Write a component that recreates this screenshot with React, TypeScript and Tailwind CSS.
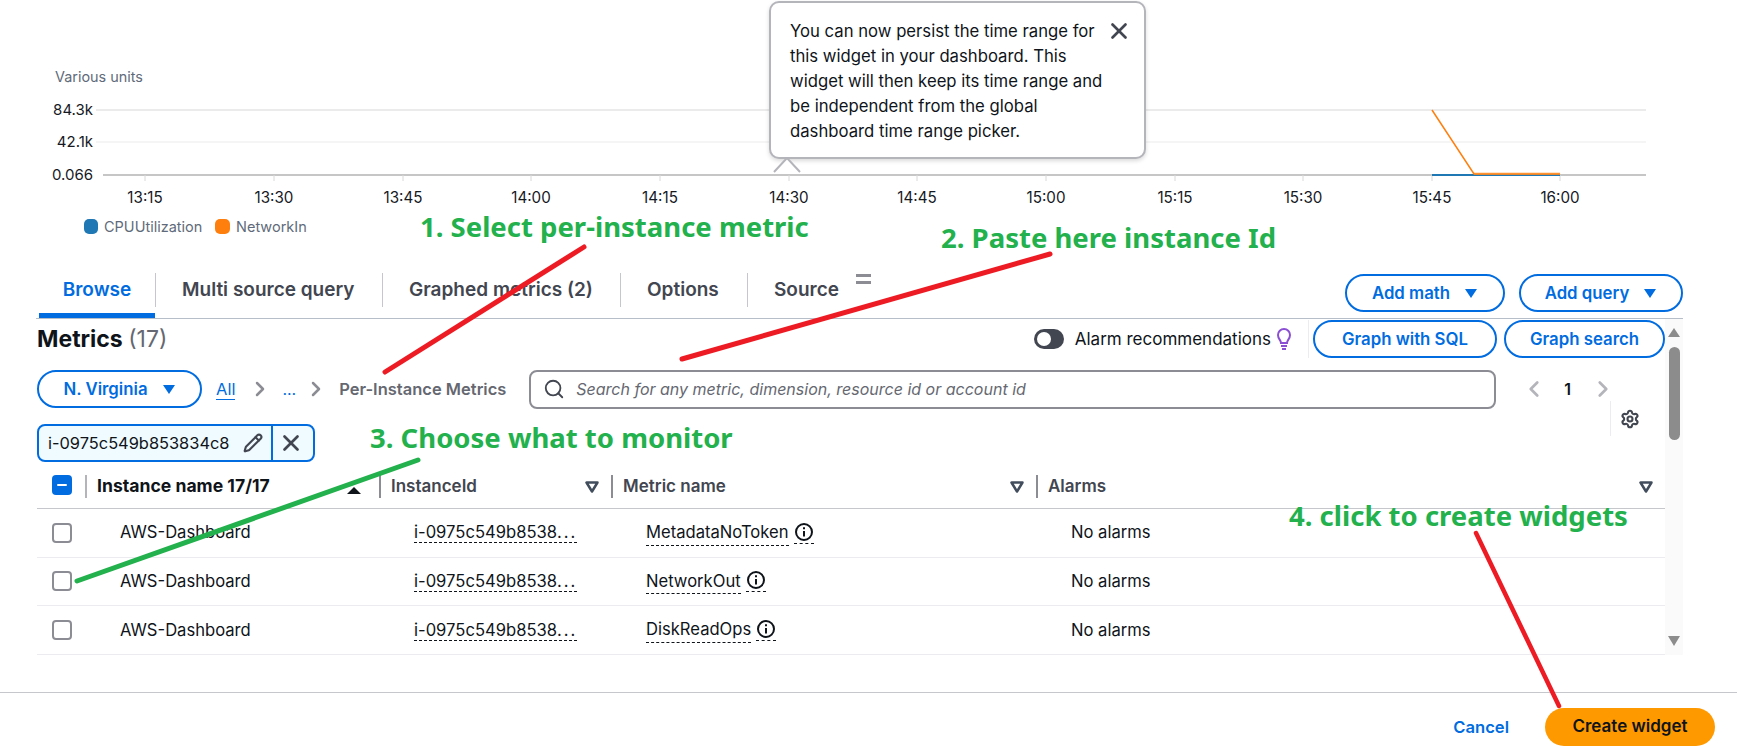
import { ChevronLeft, ChevronRight, Pencil, Search, Settings, X } from "lucide-react";

const ticks = [
  ["13:15", 145],
  ["13:30", 274],
  ["13:45", 403],
  ["14:00", 531],
  ["14:15", 660],
  ["14:30", 789],
  ["14:45", 917],
  ["15:00", 1046],
  ["15:15", 1175],
  ["15:30", 1303],
  ["15:45", 1432],
  ["16:00", 1560],
] as const;

const rows = ["MetadataNoToken", "NetworkOut", "DiskReadOps"];

const notes = [
  { text: "1. Select per-instance metric", cls: "left-[420px] top-[207px]" },
  { text: "2. Paste here instance Id", cls: "left-[941px] top-[218px]" },
  { text: "3. Choose what to monitor", cls: "left-[370px] top-[418px]" },
  { text: "4. click to create widgets", cls: "left-[1289px] top-[496px]" },
];

function Caret({ className = "" }: { className?: string }) {
  return (
    <svg width="14" height="11" viewBox="0 0 14 11" className={className}>
      <path d="M1 1h12L7 10z" fill="currentColor" />
    </svg>
  );
}

function FilterArrow() {
  return (
    <svg width="14" height="12" viewBox="0 0 14 12" className="text-[#414d5c]">
      <path d="M1.5 1.5h11L7 10.5z" fill="none" stroke="currentColor" strokeWidth="2.5" strokeLinejoin="round" />
    </svg>
  );
}

function InfoIcon() {
  return (
    <svg width="20" height="20" viewBox="0 0 20 20" className="text-[#0f141a]">
      <circle cx="10" cy="10" r="8" fill="none" stroke="currentColor" strokeWidth="2" />
      <path d="M10 9v5.5" stroke="currentColor" strokeWidth="2" />
      <path d="M10 5.2v2" stroke="currentColor" strokeWidth="2" />
    </svg>
  );
}

function PillButton({ label, caret, className = "" }: { label: string; caret?: boolean; className?: string }) {
  return (
    <button
      className={`flex h-[38px] items-center justify-center gap-[14px] rounded-[19px] border-2 border-[#006ce0] bg-white pt-px text-[16.8px] font-semibold text-[#006ce0] ${className}`}
    >
      {label}
      {caret ? <Caret /> : null}
    </button>
  );
}

function Chart() {
  return (
    <div className="h-[245px] shrink-0">
      <svg width="1737" height="245" viewBox="0 0 1737 245" className="block" fontFamily="Inter, sans-serif">
        <text x="55" y="82" fontSize="14.4" fill="#5f6b7a">Various units</text>
        <line x1="96" x2="1646" y1="110" y2="110" stroke="#ebebeb" strokeWidth="2" />
        <line x1="96" x2="1646" y1="142" y2="142" stroke="#ebebeb" strokeWidth="1" />
        <line x1="103" x2="1646" y1="175" y2="175" stroke="#c6c6c6" strokeWidth="2" />
        <text x="93" y="115" fontSize="15" textAnchor="end" fill="#16191f">84.3k</text>
        <text x="93" y="147" fontSize="15" textAnchor="end" fill="#16191f">42.1k</text>
        <text x="93" y="180" fontSize="15" textAnchor="end" fill="#16191f">0.066</text>
        {ticks.map(([label, x]) => (
          <g key={label}>
            <line x1={x} x2={x} y1="175" y2="181" stroke="#d8d8d8" />
            <text x={x} y="203" fontSize="15.2" textAnchor="middle" fill="#16191f">{label}</text>
          </g>
        ))}
        <path d="M1432 175H1560" stroke="#1f77b4" strokeWidth="2" fill="none" />
        <path d="M1474 173.5H1560" stroke="#ffc99a" strokeWidth="2" fill="none" />
        <path d="M1432 110L1474 174H1560" stroke="#ff7f0e" strokeWidth="1.5" fill="none" />
        <rect x="84" y="219" width="14" height="15" rx="5" fill="#1f77b4" />
        <text x="104" y="232" fontSize="14.5" fill="#5f6b7a">CPUUtilization</text>
        <rect x="215" y="219" width="15" height="15" rx="5" fill="#ff7f0e" />
        <text x="236" y="232" fontSize="14.5" fill="#5f6b7a">NetworkIn</text>
      </svg>
    </div>
  );
}

function Tabs() {
  const items = [
    ["Multi source query", "w-[227px]"],
    ["Graphed metrics (2)", "w-[238px]"],
    ["Options", "w-[127px]"],
    ["Source", "w-[110px]"],
  ];
  return (
    <div className="mr-[54px] ml-[36px] flex h-[74px] shrink-0 items-end justify-between border-b border-[#b6bec9]">
      <div className="flex h-[45px] items-start text-[19px] font-semibold text-[#424650]">
        <div className="ml-[3px] flex h-[45px] w-[116px] justify-center border-b-[5px] border-[#006ce0] pt-[3px] text-[#006ce0]">
          Browse
        </div>
        {items.map(([label, width]) => (
          <div key={label} className={`flex h-[34px] items-center border-l border-[#c6c6cd] pl-[26px] ${width}`}>
            {label}
          </div>
        ))}
        <div className="mt-[1px] -ml-[1px] flex flex-col gap-[4px]">
          <div className="h-[3px] w-[15px] bg-[#8c8c94]" />
          <div className="h-[3px] w-[15px] bg-[#8c8c94]" />
        </div>
      </div>
      <div className="mb-[6px] flex gap-[14px]">
        <PillButton label="Add math" caret className="w-[160px]" />
        <PillButton label="Add query" caret className="w-[164px]" />
      </div>
    </div>
  );
}

function MetricsToolbar() {
  return (
    <>
      <div className="mt-px flex h-[38px] items-center justify-between">
        <h2 className="pt-px text-[23px] font-bold text-[#0f141a]">
          Metrics <span className="font-normal text-[#656871]">(17)</span>
        </h2>
        <div className="flex items-center">
          <div className="flex h-[20px] w-[30px] items-center rounded-full bg-[#424650] pl-[3px]">
            <div className="h-[14px] w-[14px] rounded-full bg-white" />
          </div>
          <span className="ml-[11px] pt-px text-[17px] text-[#0f141a]">Alarm recommendations</span>
          <svg width="16" height="22" viewBox="0 0 16 22" className="ml-[5px]">
            <path d="M5 15c0-3-3-4-3-8a6 6 0 0 1 12 0c0 4-3 5-3 8z" fill="none" stroke="#8a4fd3" strokeWidth="2" />
            <path d="M5 18h6M6 21h4" stroke="#8a4fd3" strokeWidth="2" />
          </svg>
          <div className="ml-[16px] h-[38px] border-l border-[#ebebf0]" />
          <PillButton label="Graph with SQL" className="ml-[4px] w-[184px]" />
          <PillButton label="Graph search" className="ml-[7px] w-[161px]" />
        </div>
      </div>

      <div className="mt-[12px] flex h-[38px] items-center">
        <PillButton label="N. Virginia" caret className="w-[165px]" />
        <a className="ml-[14px] border-b border-[#006ce0] text-[16.5px] leading-[20px] text-[#006ce0]">All</a>
        <ChevronRight size={24} strokeWidth={2.5} className="ml-[13px] text-[#8c8c94]" />
        <span className="ml-[10px] text-[16px] text-[#006ce0]">...</span>
        <ChevronRight size={24} strokeWidth={2.5} className="ml-[8px] text-[#8c8c94]" />
        <span className="ml-[11px] w-[190px] text-[16.5px] font-semibold text-[#656871]">Per-Instance Metrics</span>
        <div className="flex h-[39px] w-[967px] items-center rounded-[8px] border-2 border-[#8c8c94] pl-[12px]">
          <Search size={22} strokeWidth={2} className="text-[#424650]" />
          <span className="ml-[11px] text-[16px] text-[#656871] italic">
            Search for any metric, dimension, resource id or account id
          </span>
        </div>
        <ChevronLeft size={26} strokeWidth={2.5} className="ml-[25px] text-[#b4b4bb]" />
        <span className="ml-[17px] text-[16px] font-semibold text-[#0f141a]">1</span>
        <ChevronRight size={26} strokeWidth={2.5} className="ml-[19px] text-[#b4b4bb]" />
      </div>

      <div className="mt-[16px] flex h-[38px] items-start justify-between">
        <div className="flex h-[38px] w-[278px] items-center rounded-[8px] border-2 border-[#006ce0] bg-[#f0fbff]">
          <span className="ml-[9px] w-[195px] text-[16.4px] text-[#0f141a]">i-0975c549b853834c8</span>
          <Pencil size={20} strokeWidth={2.5} className="text-[#424650]" />
          <div className="ml-[8px] h-full border-l-2 border-[#006ce0]" />
          <X size={26} strokeWidth={2.5} className="ml-[5px] text-[#424650]" />
        </div>
        <div className="-mt-[23px] mr-[25px] flex h-[35px] items-center border-l border-[#ebebf0] pl-[9px]">
          <Settings size={20} strokeWidth={2.5} className="text-[#424650]" />
        </div>
      </div>
    </>
  );
}

function MetricsTable() {
  const head = "flex h-[23px] items-center justify-between border-l-2 pr-[12px] pl-[10px] text-[17px]";
  return (
    <div>
      <div className="mt-[9px] flex h-[38px] border-b border-[#c6c6cd] pt-[4px]">
        <div className="w-[48px] pl-[15px]">
          <div className="flex h-[20px] w-[20px] items-center justify-center rounded-[4px] bg-[#006ce0]">
            <div className="h-[2px] w-[10px] rounded bg-white" />
          </div>
        </div>
        <div className={`${head} w-[294px] border-[#b4b4bb] font-bold text-[#0f141a]`}>
          <span className="text-[17.6px]">Instance name 17/17</span>
          <svg width="16" height="8" viewBox="0 0 16 8" className="mt-[6px] mr-[5px]">
            <path d="M1 8L8 1l7 7z" fill="#0f141a" />
          </svg>
        </div>
        <div className={`${head} w-[232px] border-[#8c8c94] font-semibold text-[#424650]`}>
          InstanceId
          <FilterArrow />
        </div>
        <div className={`${head} w-[425px] border-[#8c8c94] font-semibold text-[#424650]`}>
          Metric name
          <FilterArrow />
        </div>
        <div className={`${head} w-[629px] border-[#8c8c94] font-semibold text-[#424650]`}>
          Alarms
          <FilterArrow />
        </div>
      </div>
      {rows.map((metric) => (
        <div key={metric} className="flex h-[48.67px] items-center border-b border-[#ebebf0] text-[16.6px] text-[#0f141a]">
          <div className="w-[48px] pl-[15px]">
            <div className="h-[20px] w-[20px] rounded-[4px] border-2 border-[#8c8c94] bg-white" />
          </div>
          <div className="w-[294px] pl-[35px]">AWS-Dashboard</div>
          <div className="w-[232px] pl-[35px]">
            <span className="border-b border-dashed border-[#0f141a]">
              i-0975c549b8538<span className="tracking-[2px]">...</span>
            </span>
          </div>
          <div className="flex w-[425px] items-center pl-[35px]">
            <span className="border-b border-dashed border-[#0f141a]">{metric}</span>
            <span className="ml-[5px] flex border-b border-dashed border-[#0f141a] pb-[1px]">
              <InfoIcon />
            </span>
          </div>
          <div className="w-[629px] pl-[35px]">No alarms</div>
        </div>
      ))}
    </div>
  );
}

function Scrollbar() {
  return (
    <div className="flex h-[336px] w-[18px] shrink-0 flex-col items-center bg-[#fafafa] pt-[9px]">
      <svg width="12" height="9" viewBox="0 0 12 9">
        <path d="M6 0l6 9H0z" fill="#8c8c8c" />
      </svg>
      <div className="mt-[10px] h-[93px] w-[11px] rounded-full bg-[#8c8c8c]" />
      <svg width="12" height="10" viewBox="0 0 12 10" className="mt-[196px]">
        <path d="M0 0h12L6 10z" fill="#8c8c8c" />
      </svg>
    </div>
  );
}

function Annotations() {
  return (
    <>
      {notes.map((note) => (
        <div
          key={note.text}
          className={`absolute font-['Noto_Sans',sans-serif] text-[27.5px] leading-[40px] font-bold whitespace-nowrap text-[#22b14c] ${note.cls}`}
        >
          {note.text}
        </div>
      ))}
      <svg width="1737" height="748" className="pointer-events-none absolute top-0 left-0">
        <path d="M584 247L385 372" stroke="#ed1c24" strokeWidth="5" strokeLinecap="round" />
        <path d="M1050 254L682 359" stroke="#ed1c24" strokeWidth="5" strokeLinecap="round" />
        <path d="M418 460L77 581" stroke="#22b14c" strokeWidth="5" strokeLinecap="round" />
        <path d="M1476 533L1559 706" stroke="#ed1c24" strokeWidth="4.5" strokeLinecap="round" />
      </svg>
    </>
  );
}

function Popover() {
  return (
    <div className="absolute top-px left-[769px] h-[158px] w-[377px] rounded-[10px] border-2 border-[#b4b4bb] bg-white pt-[16px] pr-[30px] pl-[19px] text-[16.7px] leading-[25px] text-[#0f141a] shadow-[0_2px_4px_rgba(0,0,0,0.15)]">
      <p className="w-[325px]">
        You can now persist the time range for this widget in your dashboard. This widget will then keep its time range
        and be independent from the global dashboard time range picker.
      </p>
      <X size={26} strokeWidth={2.5} className="absolute top-[15px] right-[12px] text-[#424650]" />
      <svg width="30" height="16" viewBox="0 0 30 16" className="absolute top-[154px] left-[1px]">
        <path d="M2 15L15 1l13 14z" fill="white" />
        <path d="M2 15L15 1l13 14" fill="none" stroke="#b4b4bb" strokeWidth="2" />
      </svg>
    </div>
  );
}

export default function App() {
  return (
    <div className="relative flex h-[748px] w-[1737px] flex-col overflow-hidden bg-white font-['Inter',sans-serif]">
      <Chart />
      <Tabs />
      <div className="flex h-[336px] shrink-0 pl-[37px]">
        <div className="w-[1628px]">
          <MetricsToolbar />
          <MetricsTable />
        </div>
        <Scrollbar />
      </div>
      <div className="mt-[37px] flex grow items-start justify-end border-t border-[#c6c6cd] pt-[15px] pr-[22px]">
        <a className="mt-[7px] mr-[36px] text-[16.6px] font-semibold text-[#006ce0]">Cancel</a>
        <button className="h-[38px] w-[170px] rounded-[19px] bg-[#ff9900] text-[17px] font-semibold text-[#0f141a]">
          Create widget
        </button>
      </div>
      <Popover />
      <Annotations />
    </div>
  );
}
